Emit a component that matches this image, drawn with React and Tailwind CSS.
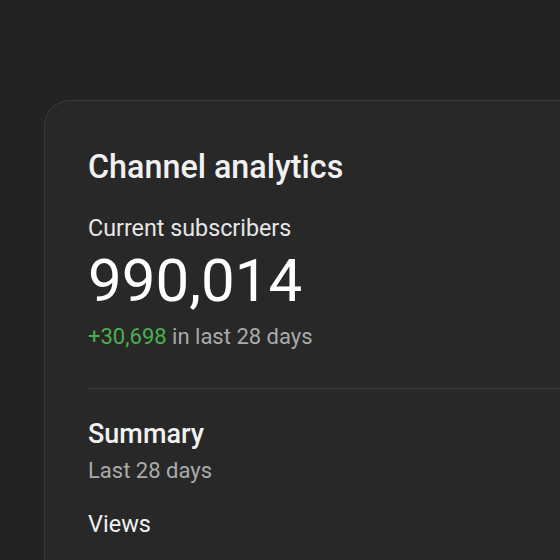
export default function App() {
  return (
    <div className="h-[560px] w-[560px] overflow-hidden bg-[#232323] pt-[100px] pl-[44px] font-['Roboto',sans-serif]">
      <div className="h-[480px] rounded-tl-[26px] border-t border-l border-[#3a3a3a] bg-[#282828] pl-[43px] pt-[44px]">
        <h1 className="text-[32.3px] leading-[44px] font-medium text-[#f1f1f1]">Channel analytics</h1>
        <p className="mt-[24px] text-[23.3px] leading-[30px] text-[#e6e6e6]">Current subscribers</p>
        <p className="mt-[4px] text-[60px] leading-[68px] text-white">990,014</p>
        <p className="mt-[7px] text-[22px] leading-[30px] text-[#aaaaaa]">
          <span className="text-[#4caf50]">+30,698</span> in last 28 days
        </p>
        <div className="mt-[36px] h-px bg-[#3f3f3f]" />
        <h2 className="mt-[28px] text-[27px] leading-[34px] font-medium text-[#f1f1f1]">Summary</h2>
        <p className="mt-[5px] text-[22px] leading-[30px] text-[#aaaaaa]">Last 28 days</p>
        <p className="mt-[23px] text-[23.5px] leading-[30px] text-[#f1f1f1]">Views</p>
      </div>
    </div>
  );
}
